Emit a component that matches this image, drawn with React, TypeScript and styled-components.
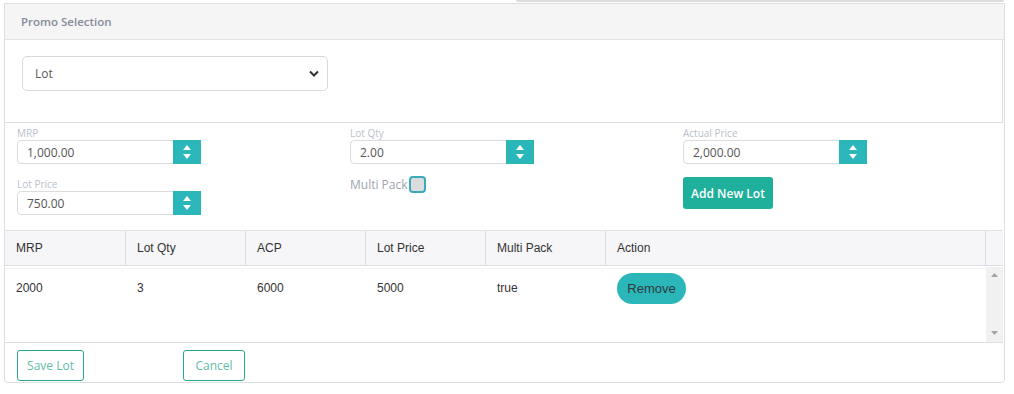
import React from "react";
import styled, { createGlobalStyle } from "styled-components";

const GlobalStyle = createGlobalStyle`
  body {
    margin: 0;
    background: #fff;
    font-family: "Open Sans", "Liberation Sans", sans-serif;
  }
  * { box-sizing: border-box; }
`;

const teal = "#2bb6b9";
const green = "#1fb09b";

const Page = styled.div`
  width: 1014px;
  padding: 0 9px 0 4px;
`;

const TopStrip = styled.div`
  margin-left: 512px;
  width: 488px;
  height: 2px;
  background: #dcdcdc;
  border-radius: 0 0 2px 2px;
  margin-bottom: 1px;
`;

const Card = styled.section`
  border: 1px solid #dedede;
  border-radius: 0 0 4px 4px;
  background: #fff;
`;

const CardHeader = styled.div`
  height: 36px;
  display: flex;
  align-items: center;
  padding-left: 16px;
  background: #f5f5f5;
  border-bottom: 1px solid #e2e2e2;
  font-size: 11.5px;
  font-weight: 600;
  color: #868b9b;
`;

const SelectBox = styled.div`
  height: 83px;
  padding: 16px 17px;
  border-right: 1px solid #dedede;
  border-bottom: 1px solid #dedede;
  margin-right: 1px;
`;

const SelectWrap = styled.div`
  width: 306px;
  height: 35px;
  border: 1px solid #d9d9d9;
  border-radius: 5px;
  display: flex;
  align-items: center;
  justify-content: space-between;
  padding: 0 8px 0 12px;
  font-size: 12px;
  color: #5a5a5a;
`;

const FormGrid = styled.div`
  display: grid;
  grid-template-columns: 333px 333px 333px;
  row-gap: 14px;
  padding: 4px 0 15px 12px;
`;

const Field = styled.div`
  display: flex;
  flex-direction: column;
`;

const Label = styled.label`
  font-size: 10px;
  line-height: 13px;
  color: #b9bfcb;
`;

const NumberBox = styled.div`
  width: 184px;
  height: 24px;
  display: flex;
  border: 1px solid #dcdcdc;
  border-radius: 4px 0 0 4px;
`;

const NumberValue = styled.div`
  flex: 1;
  display: flex;
  align-items: center;
  padding-left: 9px;
  font-size: 12px;
  color: #555;
`;

const Spinner = styled.div`
  width: 28px;
  margin: -1px -1px -1px 0;
  background: ${teal};
  display: flex;
  flex-direction: column;
  align-items: center;
  justify-content: center;
  gap: 4px;
`;

const CheckRow = styled.div`
  display: flex;
  align-items: center;
  height: 17px;
  font-size: 12px;
  color: #a0a4ad;
  margin-top: -2px;
`;

const CheckBox = styled.span`
  width: 17px;
  height: 17px;
  border: 2px solid #3aa9b9;
  border-radius: 4px;
  background: #dcdcdc;
  margin-left: 1px;
`;

const AddButton = styled.button`
  width: 90px;
  height: 32px;
  border: none;
  border-radius: 3px;
  background: ${green};
  color: #fff;
  font-family: inherit;
  font-size: 12px;
  font-weight: 600;
  margin-top: -1px;
  padding: 0;
`;

const TableWrap = styled.div`
  border-top: 1px solid #e2e2e2;
  border-bottom: 1px solid #dedede;
  margin-right: 1px;
  font-family: "Liberation Sans", Arial, sans-serif;
  font-size: 12px;
  color: #333;
`;

const Cols = "121px 120px 120px 120px 120px 380px 17px";

const HeadRow = styled.div`
  display: grid;
  grid-template-columns: ${Cols};
  height: 35px;
  background: #f6f6f8;
  border-bottom: 1px solid #dcdde4;
`;

const HeadCell = styled.div<{ $last?: boolean }>`
  display: flex;
  align-items: center;
  padding-left: 11px;
  border-right: ${(p) => (p.$last ? "none" : "1px solid #dcdde4")};
`;

const BodyArea = styled.div`
  display: flex;
  height: 74px;
  border-top: 1px solid #eef0fb;
  margin-top: 2px;
`;

const BodyRows = styled.div`
  flex: 1;
`;

const BodyRow = styled.div`
  display: grid;
  grid-template-columns: 121px 120px 120px 120px 120px 380px;
  height: 38px;
  align-items: center;
`;

const BodyCell = styled.div`
  padding-left: 11px;
  font-size: 12px;
`;

const RemoveButton = styled.button`
  width: 69px;
  height: 31px;
  border: none;
  border-radius: 16px;
  background: ${teal};
  color: #2f3b3c;
  font-family: "Liberation Sans", Arial, sans-serif;
  font-size: 13px;
  padding: 0;
  margin-top: 1px;
`;

const ScrollTrack = styled.div`
  width: 17px;
  background: #f1f1f1;
  display: flex;
  flex-direction: column;
  align-items: center;
  justify-content: space-between;
  padding: 6px 0 7px;
  margin-top: -2px;
`;

const Footer = styled.div`
  display: flex;
  align-items: flex-start;
  gap: 99px;
  padding: 7px 12px 0;
  height: 39px;
`;

const OutlineButton = styled.button<{ $w: number }>`
  width: ${(p) => p.$w}px;
  height: 31px;
  border: 1px solid #2aa68f;
  border-radius: 3px;
  background: #fff;
  color: #62bca8;
  font-family: inherit;
  font-size: 12px;
  padding: 0;
`;

const Arrows = () => (
  <>
    <svg width="8" height="5" viewBox="0 0 8 5">
      <path d="M4 0 L8 5 L0 5 Z" fill="#fff" />
    </svg>
    <svg width="8" height="5" viewBox="0 0 8 5">
      <path d="M0 0 L8 0 L4 5 Z" fill="#fff" />
    </svg>
  </>
);

const NumberInput = ({ label, value }: { label: string; value: string }) => (
  <Field>
    <Label>{label}</Label>
    <NumberBox>
      <NumberValue>{value}</NumberValue>
      <Spinner>
        <Arrows />
      </Spinner>
    </NumberBox>
  </Field>
);

const headers = ["MRP", "Lot Qty", "ACP", "Lot Price", "Multi Pack", "Action"];

export default function App() {
  return (
    <Page>
      <GlobalStyle />
      <TopStrip />
      <Card>
        <CardHeader>Promo Selection</CardHeader>
        <SelectBox>
          <SelectWrap>
            <span>Lot</span>
            <svg width="10" height="7" viewBox="0 0 10 7">
              <path d="M1 1.5 L5 5.5 L9 1.5" fill="none" stroke="#333" strokeWidth="2" />
            </svg>
          </SelectWrap>
        </SelectBox>

        <FormGrid>
          <NumberInput label="MRP" value="1,000.00" />
          <NumberInput label="Lot Qty" value="2.00" />
          <NumberInput label="Actual Price" value="2,000.00" />
          <NumberInput label="Lot Price" value="750.00" />
          <Field>
            <CheckRow>
              Multi Pack
              <CheckBox />
            </CheckRow>
          </Field>
          <Field>
            <AddButton>Add New Lot</AddButton>
          </Field>
        </FormGrid>

        <TableWrap>
          <HeadRow>
            {headers.map((h) => (
              <HeadCell key={h}>{h}</HeadCell>
            ))}
            <HeadCell $last />
          </HeadRow>
          <BodyArea>
            <BodyRows>
              <BodyRow>
                <BodyCell>2000</BodyCell>
                <BodyCell>3</BodyCell>
                <BodyCell>6000</BodyCell>
                <BodyCell>5000</BodyCell>
                <BodyCell>true</BodyCell>
                <BodyCell>
                  <RemoveButton>Remove</RemoveButton>
                </BodyCell>
              </BodyRow>
            </BodyRows>
            <ScrollTrack>
              <svg width="7" height="4" viewBox="0 0 7 4">
                <path d="M3.5 0 L7 4 L0 4 Z" fill="#a3a3a3" />
              </svg>
              <svg width="7" height="4" viewBox="0 0 7 4">
                <path d="M0 0 L7 0 L3.5 4 Z" fill="#a3a3a3" />
              </svg>
            </ScrollTrack>
          </BodyArea>
        </TableWrap>

        <Footer>
          <OutlineButton $w={67}>Save Lot</OutlineButton>
          <OutlineButton $w={62}>Cancel</OutlineButton>
        </Footer>
      </Card>
    </Page>
  );
}
